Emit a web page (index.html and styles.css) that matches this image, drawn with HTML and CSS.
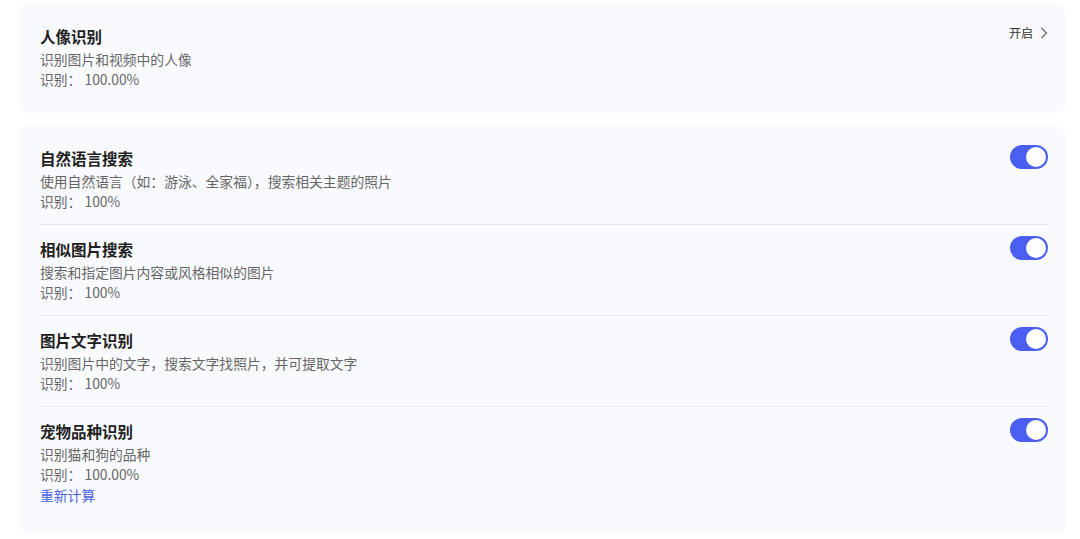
FILE: index.html
```html
<!DOCTYPE html>
<html lang="zh">
<head>
<meta charset="utf-8">
<link rel="stylesheet" href="styles.css">
</head>
<body>
<div class="page">
  <section class="card card-top">
    <div class="row">
      <div class="info">
        <div class="title">人像识别</div>
        <div class="desc">识别图片和视频中的人像</div>
        <div class="desc">识别： 100.00%</div>
      </div>
      <div class="action">开启
        <svg class="chev" width="8" height="12" viewBox="0 0 8 12"><path d="M1.5 1 L6.5 6 L1.5 11" fill="none" stroke="#666" stroke-width="1.2"/></svg>
      </div>
    </div>
  </section>
  <section class="card card-list">
    <div class="row item">
      <div class="info">
        <div class="title">自然语言搜索</div>
        <div class="desc">使用自然语言（如：游泳、全家福），搜索相关主题的照片</div>
        <div class="desc">识别： 100%</div>
      </div>
      <div class="toggle"><span class="knob"></span></div>
    </div>
    <div class="row item">
      <div class="info">
        <div class="title">相似图片搜索</div>
        <div class="desc">搜索和指定图片内容或风格相似的图片</div>
        <div class="desc">识别： 100%</div>
      </div>
      <div class="toggle"><span class="knob"></span></div>
    </div>
    <div class="row item">
      <div class="info">
        <div class="title">图片文字识别</div>
        <div class="desc">识别图片中的文字，搜索文字找照片，并可提取文字</div>
        <div class="desc">识别： 100%</div>
      </div>
      <div class="toggle"><span class="knob"></span></div>
    </div>
    <div class="row item last">
      <div class="info">
        <div class="title">宠物品种识别</div>
        <div class="desc">识别猫和狗的品种</div>
        <div class="desc">识别： 100.00%</div>
        <div class="link">重新计算</div>
      </div>
      <div class="toggle"><span class="knob"></span></div>
    </div>
  </section>
</div>
</body>
</html>
```
FILE: styles.css
```css
* { box-sizing: border-box; }
html, body { margin: 0; padding: 0; background: #ffffff; }
body {
  font-family: "Noto Sans CJK SC", "Noto Sans", sans-serif;
  color: #222;
}
.page {
  width: 1080px;
  padding: 4px 14px 0 18px;
  display: flex;
  flex-direction: column;
  gap: 13px;
}
.card {
  background: #f9fafd;
  border-radius: 10px;
  width: 1048px;
}
.card-top {
  padding: 20px 18px 24px 22px;
}
.card-list {
  padding: 8px 18px 14px 22px;
}
.row {
  display: flex;
  justify-content: space-between;
  align-items: flex-start;
}
.item {
  padding: 12px 0 13px;
  border-bottom: 1px solid #e7e9ef;
}
.item.last { border-bottom: none; }
.title {
  font-size: 15.5px;
  font-weight: 700;
  line-height: 24px;
  margin-bottom: 1px;
  color: #1f1f1f;
}
.desc {
  font-size: 13.8px;
  line-height: 20px;
  color: #666;
}
.link {
  font-size: 13.8px;
  line-height: 22px;
  color: #4b61e6;
}
.action {
  font-size: 12px;
  color: #333;
  display: flex;
  align-items: center;
  gap: 7px;
  line-height: 16px;
  margin-top: 1px;
}
.toggle {
  width: 38px;
  height: 24px;
  border-radius: 12px;
  background: #4a5ff1;
  position: relative;
  margin-top: -1px;
}
.knob {
  position: absolute;
  right: 2px;
  top: 2px;
  width: 20px;
  height: 20px;
  border-radius: 50%;
  background: #fff;
}
```
